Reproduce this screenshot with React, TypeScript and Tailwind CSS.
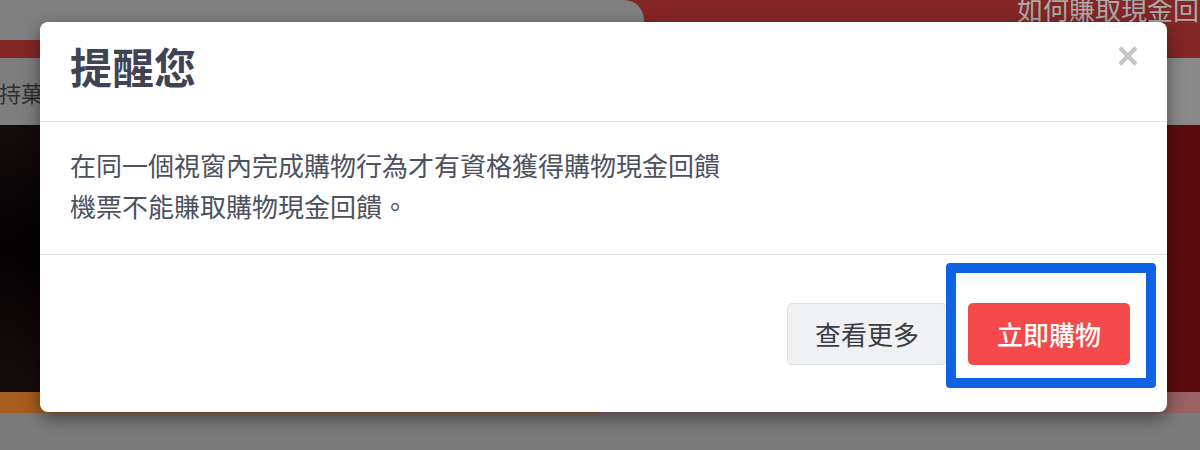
import React from 'react';

// Reminder modal shown before leaving for a shop: page is dimmed behind it.

const App: React.FC = () => {
  return (
    <div className="relative w-[1200px] h-[450px] overflow-hidden bg-[#7b7b7b] font-['Noto_Sans_CJK_TC','Noto_Sans',sans-serif]">
      {/* ── Dimmed page behind the backdrop ─────────────────────────────── */}
      <div className="flex flex-col h-full">
        <div className="h-[58px] bg-[#842626] flex items-start shrink-0">
          <div className="w-[644px] h-[40px] bg-[#808080] rounded-r-full shrink-0" />
          <div className="ml-[373px] -mt-[4px] text-[26px] leading-none text-[#aaaaaa] whitespace-nowrap shrink-0">
            如何賺取現金回饋
          </div>
        </div>
        <div className="h-[67px] flex shrink-0">
          <div className="w-[600px] bg-[#7e7e7e] flex items-center">
            <span className="text-[22px] text-[#2f2f2f] whitespace-nowrap -ml-[1px] mt-[1px]">持菓</span>
          </div>
          <div className="flex-1 bg-[#8a8a8a]" />
        </div>
        <div className="h-[267px] flex shrink-0">
          <div className="w-[600px] bg-[linear-gradient(180deg,#120b0b_0%,#050203_45%,#150b0c_100%)]" />
          <div className="flex-1 bg-[#5b0b0b]" />
        </div>
        <div className="h-[21px] flex shrink-0">
          <div className="w-[600px] bg-[#a65d1e]" />
          <div className="flex-1 bg-[#9a6262]" />
        </div>
        <div className="flex-1 bg-[#7b7b7b]" />
      </div>

      {/* ── Modal ───────────────────────────────────────────────────────── */}
      <div className="absolute left-[40px] top-[22px] w-[1127px] bg-white rounded-[8px] shadow-[0_6px_18px_rgba(0,0,0,0.45)] flex flex-col">
        <div className="h-[100px] px-[30px] flex items-start justify-between border-b border-[#e5e5e5]">
          <h2 className="mt-[20px] text-[42px] leading-[48px] font-bold text-[#3f4354]">提醒您</h2>
          <button className="mt-[15px] -mr-[2px] text-[38px] leading-none font-bold text-[#c6c6c6] font-['Liberation_Sans',sans-serif]">×</button>
        </div>
        <div className="h-[133px] px-[30px] pt-[22px] border-b border-[#e5e5e5] text-[26px] leading-[41px] text-[#4d515e]">
          <p>在同一個視窗內完成購物行為才有資格獲得購物現金回饋</p>
          <p>機票不能賺取購物現金回饋。</p>
        </div>
        <div className="h-[157px] pr-[37px] flex items-center justify-end gap-[21px]">
          <button className="w-[160px] h-[62px] rounded-[5px] bg-[#eff1f3] border border-[#dde0e3] text-[26px] text-[#3a3d45]">
            查看更多
          </button>
          <button className="w-[162px] h-[62px] rounded-[5px] bg-[#f44a4b] text-[26px] font-medium text-white">
            立即購物
          </button>
        </div>
      </div>

      {/* annotation box drawn over the primary button */}
      <div className="absolute left-[946px] top-[263px] w-[210px] h-[125px] border-[10px] border-[#0f62e3] rounded-[4px]" />
    </div>
  );
};

export default App;
